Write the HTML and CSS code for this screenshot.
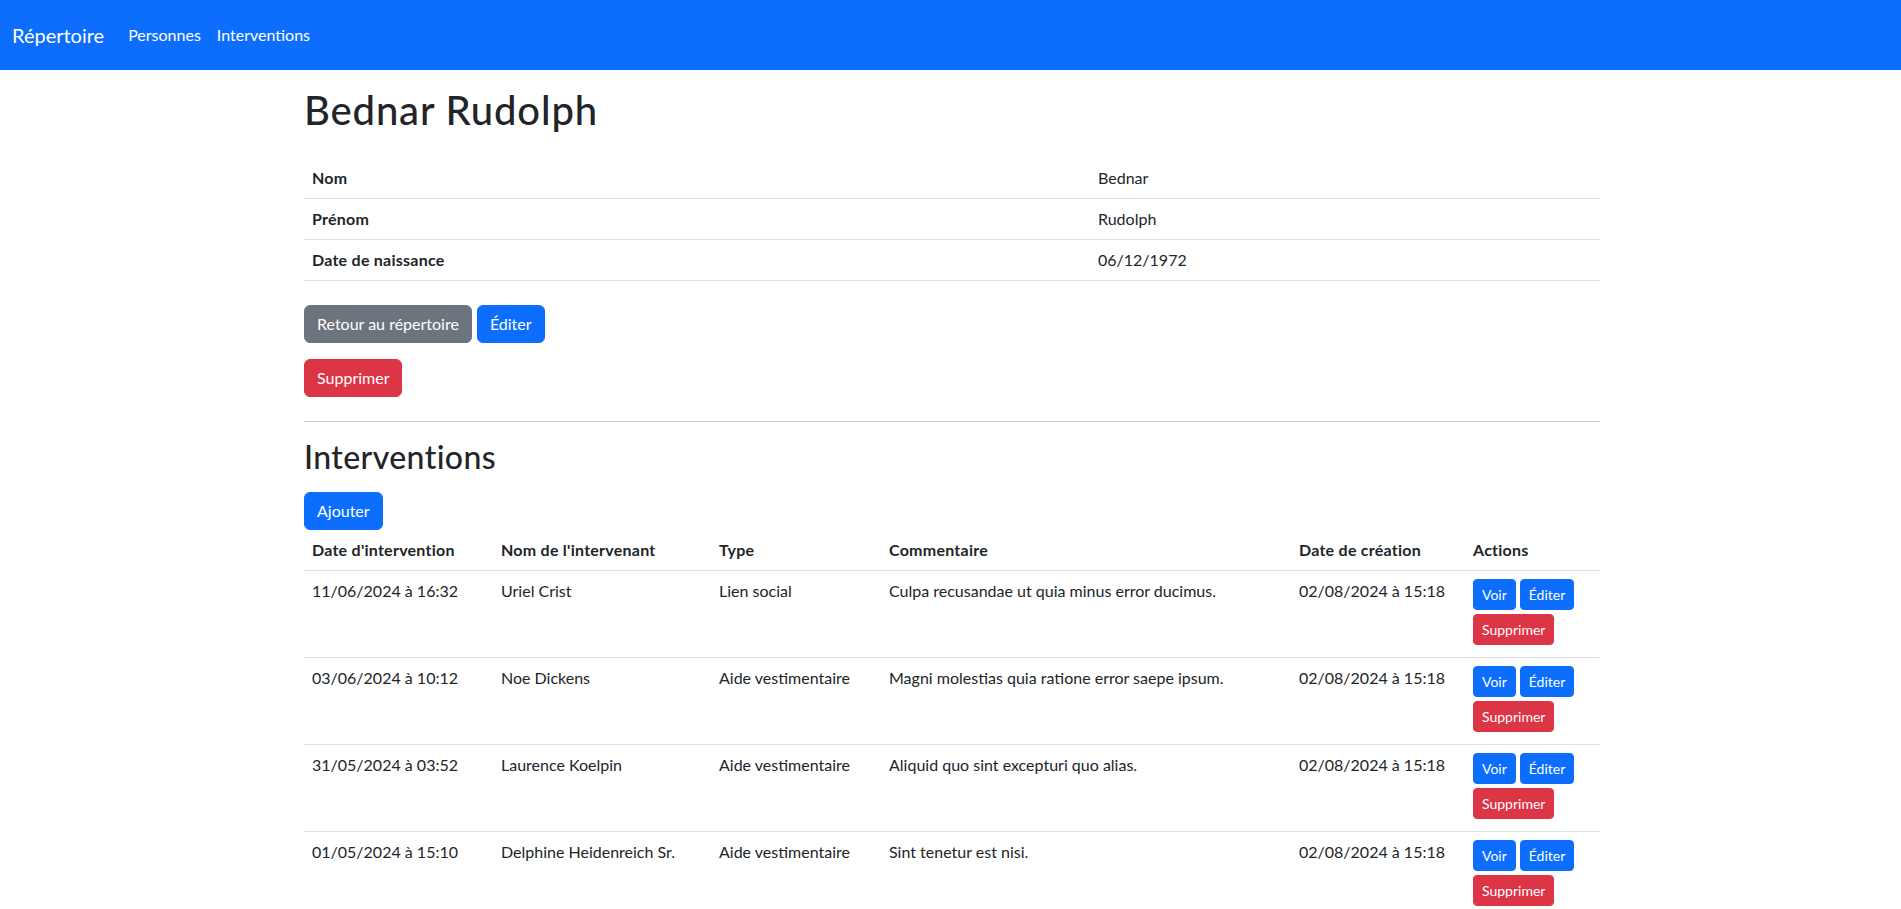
FILE: index.html
```html
<!DOCTYPE html>
<html lang="fr">
<head>
<meta charset="utf-8">
<title>Bednar Rudolph</title>
<link rel="stylesheet" href="styles.css">
</head>
<body>
<nav class="navbar">
  <a class="brand" href="#">Répertoire</a>
  <ul class="nav">
    <li><a class="nav-link" href="#">Personnes</a></li>
    <li><a class="nav-link" href="#">Interventions</a></li>
  </ul>
</nav>
<main class="container">
  <h1 class="title">Bednar Rudolph</h1>
  <table class="details">
    <colgroup><col class="col-label"><col class="col-value"></colgroup>
    <tbody>
      <tr><th>Nom</th><td>Bednar</td></tr>
      <tr><th>Prénom</th><td>Rudolph</td></tr>
      <tr><th>Date de naissance</th><td>06/12/1972</td></tr>
    </tbody>
  </table>
  <div class="btn-line">
    <a class="btn btn-secondary" href="#">Retour au répertoire</a>
    <a class="btn btn-primary" href="#">Éditer</a>
  </div>
  <form class="delete-form">
    <button type="button" class="btn btn-danger">Supprimer</button>
  </form>
  <hr class="sep">
  <h2 class="subtitle">Interventions</h2>
  <a class="btn btn-primary" href="#">Ajouter</a>
  <table class="list">
    <colgroup>
      <col class="c-date"><col class="c-name"><col class="c-type"><col class="c-comment"><col class="c-created"><col class="c-actions">
    </colgroup>
    <thead>
      <tr>
        <th>Date d'intervention</th>
        <th>Nom de l'intervenant</th>
        <th>Type</th>
        <th>Commentaire</th>
        <th>Date de création</th>
        <th>Actions</th>
      </tr>
    </thead>
    <tbody>
      <tr>
        <td>11/06/2024 à 16:32</td>
        <td>Uriel Crist</td>
        <td>Lien social</td>
        <td>Culpa recusandae ut quia minus error ducimus.</td>
        <td>02/08/2024 à 15:18</td>
        <td class="actions">
          <div class="sm-line"><a class="btn-sm btn-primary" href="#">Voir</a><a class="btn-sm btn-primary" href="#">Éditer</a></div>
          <button type="button" class="btn-sm btn-danger">Supprimer</button>
        </td>
      </tr>
      <tr>
        <td>03/06/2024 à 10:12</td>
        <td>Noe Dickens</td>
        <td>Aide vestimentaire</td>
        <td>Magni molestias quia ratione error saepe ipsum.</td>
        <td>02/08/2024 à 15:18</td>
        <td class="actions">
          <div class="sm-line"><a class="btn-sm btn-primary" href="#">Voir</a><a class="btn-sm btn-primary" href="#">Éditer</a></div>
          <button type="button" class="btn-sm btn-danger">Supprimer</button>
        </td>
      </tr>
      <tr>
        <td>31/05/2024 à 03:52</td>
        <td>Laurence Koelpin</td>
        <td>Aide vestimentaire</td>
        <td>Aliquid quo sint excepturi quo alias.</td>
        <td>02/08/2024 à 15:18</td>
        <td class="actions">
          <div class="sm-line"><a class="btn-sm btn-primary" href="#">Voir</a><a class="btn-sm btn-primary" href="#">Éditer</a></div>
          <button type="button" class="btn-sm btn-danger">Supprimer</button>
        </td>
      </tr>
      <tr>
        <td>01/05/2024 à 15:10</td>
        <td>Delphine Heidenreich Sr.</td>
        <td>Aide vestimentaire</td>
        <td>Sint tenetur est nisi.</td>
        <td>02/08/2024 à 15:18</td>
        <td class="actions">
          <div class="sm-line"><a class="btn-sm btn-primary" href="#">Voir</a><a class="btn-sm btn-primary" href="#">Éditer</a></div>
          <button type="button" class="btn-sm btn-danger">Supprimer</button>
        </td>
      </tr>
    </tbody>
  </table>
</main>
</body>
</html>
```

FILE: styles.css
```css
* { box-sizing: border-box; }

body {
  margin: 0;
  font-family: Lato, "Noto Sans", "Liberation Sans", sans-serif;
  font-size: 16px;
  line-height: 1.5;
  color: #212529;
  background: #fff;
}

a { text-decoration: none; }

.navbar {
  display: flex;
  align-items: center;
  height: 70px;
  padding: 0 12px;
  background: #0d6efd;
}

.brand {
  color: #fff;
  font-size: 20px;
  line-height: 30px;
  padding: 5px 0;
  margin-right: 16px;
}

.nav {
  display: flex;
  list-style: none;
  margin: 0;
  padding: 0;
}

.nav-link {
  display: block;
  color: #fff;
  padding: 8px;
  line-height: 24px;
}

.container {
  max-width: 1320px;
  margin: 0 auto;
  padding: 16px 10.5px 0 13.5px;
}

.title {
  font-size: 40px;
  font-weight: 500;
  line-height: 1.2;
  letter-spacing: 0.85px;
  margin: 0 0 24px;
}

.subtitle {
  font-size: 32px;
  font-weight: 500;
  line-height: 1.2;
  letter-spacing: 0.4px;
  margin: 0 0 16px;
}

table {
  width: 100%;
  border-collapse: collapse;
  table-layout: fixed;
}

th, td {
  padding: 8px;
  text-align: left;
  vertical-align: top;
  border-bottom: 1px solid #dee2e6;
}

th { font-weight: 700; letter-spacing: 0.25px; }

.details { margin-bottom: 24px; }
.col-label { width: 786px; }
.col-value { width: 510px; }

.c-date { width: 189px; }
.c-name { width: 218px; }
.c-type { width: 170px; }
.c-comment { width: 410px; }
.c-created { width: 174px; }
.c-actions { width: 135px; }

.btn-line {
  display: flex;
  gap: 5px;
}

.delete-form { margin: 16px 0 0; }

.btn {
  display: inline-block;
  padding: 6px 12px;
  font-family: inherit;
  font-size: 16px;
  line-height: 24px;
  border: 1px solid transparent;
  border-radius: 6px;
  color: #fff;
  cursor: pointer;
}

.btn-sm {
  display: inline-block;
  padding: 4px 8px;
  font-family: inherit;
  font-size: 14px;
  line-height: 21px;
  border: 1px solid transparent;
  border-radius: 4px;
  color: #fff;
  cursor: pointer;
}

.btn-primary { background: #0d6efd; border-color: #0d6efd; }
.btn-secondary { background: #6c757d; border-color: #6c757d; }
.btn-danger { background: #dc3545; border-color: #dc3545; }

.sep {
  margin: 24px 0 16px;
  border: 0;
  border-top: 1px solid #c8c9ca;
  height: 0;
}

.actions .sm-line {
  display: flex;
  gap: 4px;
  margin-bottom: 4px;
}

.actions .btn-danger { margin-bottom: 4px; display: block; }
```
